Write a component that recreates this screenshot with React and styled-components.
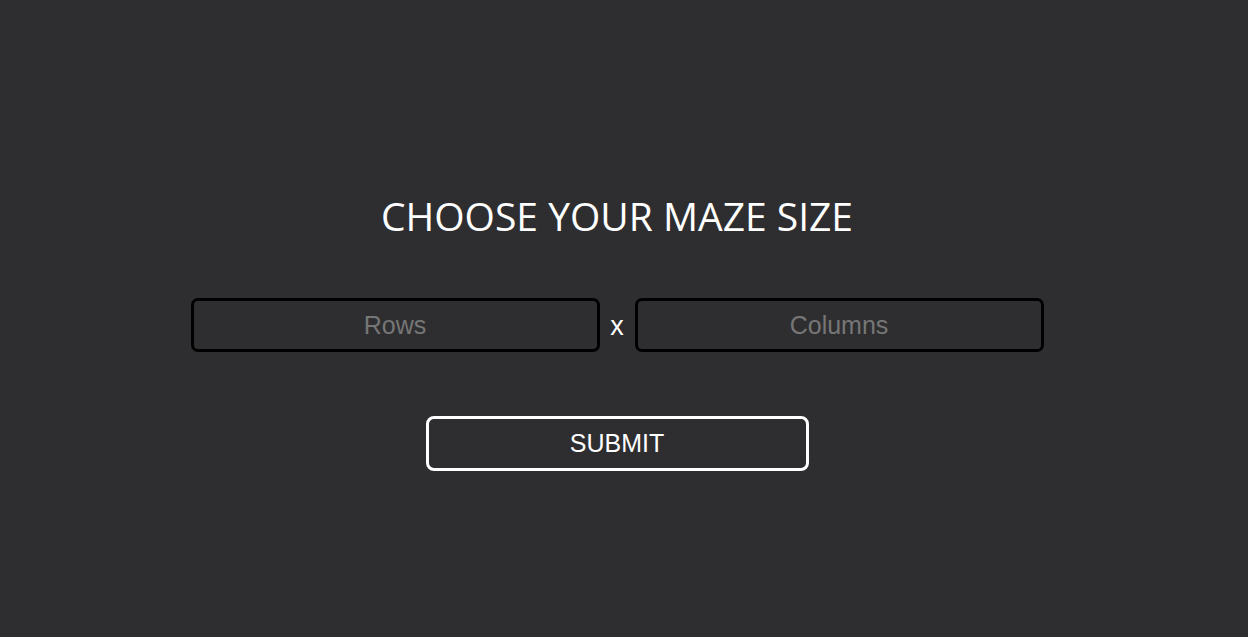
import React from 'react';
import styled, { createGlobalStyle } from 'styled-components';

const GlobalStyle = createGlobalStyle`
  html, body {
    margin: 0;
    padding: 0;
    background: #2e2e30;
  }
`;

const Page = styled.div`
  box-sizing: border-box;
  width: 1234px;
  height: 637px;
  padding-top: 189px;
  display: flex;
  flex-direction: column;
  align-items: center;
  background: #2e2e30;
`;

const Title = styled.h1`
  margin: 0;
  color: #ffffff;
  font-family: "Open Sans", "Noto Sans", sans-serif;
  font-weight: 400;
  font-size: 39px;
  line-height: 54px;
  letter-spacing: 0;
`;

const SizeRow = styled.div`
  margin-top: 55px;
  display: flex;
  align-items: center;
`;

const SizeInput = styled.input`
  box-sizing: border-box;
  width: 409px;
  height: 54px;
  border: 3px solid #000000;
  border-radius: 7px;
  background: transparent;
  color: #ffffff;
  text-align: center;
  font-family: "Liberation Sans", Arial, sans-serif;
  font-size: 25px;
  outline: none;

  &::placeholder {
    color: #767676;
  }
`;

const Times = styled.span`
  width: 35px;
  text-align: center;
  color: #ffffff;
  font-family: "Liberation Sans", Arial, sans-serif;
  font-size: 27px;
  line-height: 1;
  padding-top: 2px;
`;

const SubmitButton = styled.button`
  box-sizing: border-box;
  margin-top: 64px;
  width: 383px;
  height: 55px;
  border: 3px solid #ffffff;
  border-radius: 8px;
  background: transparent;
  color: #ffffff;
  font-family: "Liberation Sans", Arial, sans-serif;
  font-size: 25px;
  cursor: pointer;
`;

export default function App() {
  return (
    <>
      <GlobalStyle />
      <Page>
        <Title>CHOOSE YOUR MAZE SIZE</Title>
        <SizeRow>
          <SizeInput type="text" placeholder="Rows" />
          <Times>x</Times>
          <SizeInput type="text" placeholder="Columns" />
        </SizeRow>
        <SubmitButton>SUBMIT</SubmitButton>
      </Page>
    </>
  );
}
